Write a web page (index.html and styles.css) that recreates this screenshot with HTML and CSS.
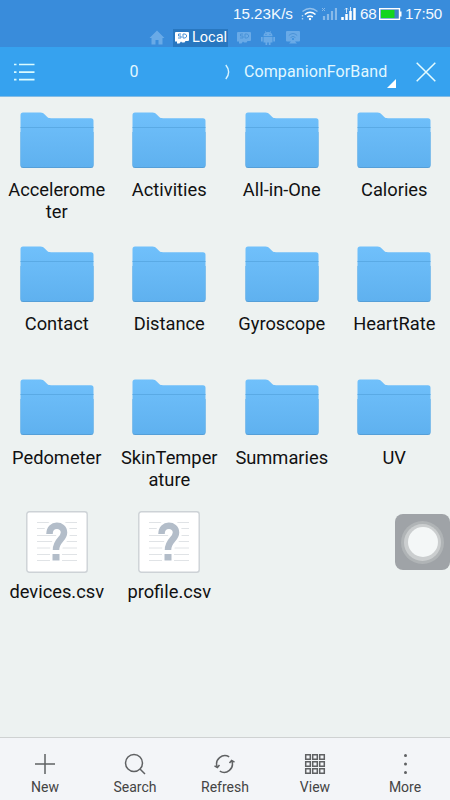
FILE: index.html
```
<!DOCTYPE html>
<html lang="en">
<head>
  <meta charset="UTF-8" />
  <meta name="viewport" content="width=device-width, initial-scale=1.0" />
  <title>CompanionForBand</title>
  <link rel="stylesheet" href="styles.css">
</head>
<body>

  <!-- SHARED ICONS -->
  <svg class="defs" width="0" height="0">
    <defs>
      <linearGradient id="folder-fill" x1="0" y1="0" x2="0" y2="1">
        <stop offset="0" stop-color="#70c0fb" />
        <stop offset="1" stop-color="#5fb1ef" />
      </linearGradient>
      <symbol id="folder" viewBox="0 0 74 57">
        <path fill="#559fd8" d="M.5 4V53.500a2.500 2.500 0 0 0 2.500 2.500H71a2.500 2.500 0 0 0 2.500-2.500V20H.5Z" />
        <path fill="url(#folder-fill)" d="M.5 3A2.500 2.500 0 0 1 3 .5H20.500c2 0 3 .8 4.500 2.300L27 4.800C28.200 6 29 6.200 31 6.200H71a2.500 2.500 0 0 1 2.500 2.500V52.500A2.500 2.500 0 0 1 71 55H3A2.500 2.500 0 0 1 .5 52.500Z" />
        <path fill="none" stroke="#5aaae5" d="M.5 15.500H73.500" />
      </symbol>
      <symbol id="unknown-file" viewBox="0 0 62 62">
        <rect x=".8" y=".8" width="60.400" height="60.400" rx="2.500" fill="#fff" stroke="#cdd2d6" stroke-width="1.400" />
        <path stroke="#e0e3e6" d="M11 11.500H51M11 17.500H51M11 24.500H51M11 30.500H51M11 37H51M11 43.500H51M11 49.500H51" />
        <path fill="none" stroke="#fff" stroke-width="12" d="M24 22.500C24 12 38 12.500 38 21.500C38 29 30 28 30 40V50" />
        <path fill="none" stroke="#b3bdc9" stroke-width="6.500" d="M23.500 23C23.500 12 38 12.500 38 21.500C38 28.500 30 29 30 39" />
        <rect x="26.500" y="43" width="7" height="6.500" fill="#b3bdc9" />
      </symbol>
      <symbol id="sd" viewBox="0 0 14 12">
        <path fill="currentColor" d="M1 0H13a1 1 0 0 1 1 1V8a1 1 0 0 1-1 1H10.500L9.500 10.500H7L6 9.500L4.500 11.500H2V9.500H0V1a1 1 0 0 1 1-1Z" />
        <path class="mark" d="M6 2H3.500V4H6V6H3M8 2V6H10L11.500 5V3L10 2Z" />
      </symbol>
    </defs>
  </svg>

  <!-- STATUS BAR -->
  <div class="status">
    <span class="speed">15.23K/s</span>
    <svg class="wifi" width="18" height="14" viewBox="0 0 18 14" fill="none" stroke="#fff">
      <path stroke-width="1.400" opacity=".45" d="M1.500 4.500Q9-1.500 16.500 4.500" />
      <path stroke-width="1.600" d="M3.800 7.500Q9 3 14.500 7.500M6.300 10Q9 8 11.800 10" />
      <circle cx="9" cy="12" r="1.200" fill="#fff" stroke="none" />
      <path stroke-width="1.400" opacity=".6" d="M1.500 8V9.500M1.500 11V12.500" />
    </svg>
    <svg class="signal-off" width="15" height="14" viewBox="0 0 15 14" fill="none" stroke="#fff" opacity=".4">
      <path stroke-width="2.200" d="M2 9V13M6 7V13M10 4V13M14 1V13" />
      <path d="M0 1L3 4M3 1L0 4" />
    </svg>
    <svg class="signal" width="16" height="14" viewBox="0 0 16 14" fill="none" stroke="#fff">
      <path stroke-width="2.500" d="M1.500 10V13M5.500 7V13M9.500 4V13M13.500 1V13" />
      <path stroke-width="1" d="M5.500 6V1M4 2.500L5.500 1L7 2.500M9.500 0V4" opacity=".75" />
    </svg>
    <span class="charge">68</span>
    <svg class="battery" width="23" height="12" viewBox="0 0 23 12">
      <rect x=".7" y=".7" width="19.800" height="10.600" fill="#3c83c4" stroke="#fff" stroke-width="1.400" />
      <rect x="2" y="2" width="13.500" height="8" fill="#13d51e" />
      <path fill="#fff" d="M21 3.500H22.500V8.500H21Z" />
    </svg>
    <span class="time">17:50</span>
  </div>

  <!-- WINDOW TABS -->
  <nav class="tabs">
    <svg class="tab-home" width="16" height="15" viewBox="0 0 16 15" fill="currentColor">
      <path d="M8 .5L15.500 8H13.500V14.500H9.500V10H6.500V14.500H2.500V8H.5Z" />
    </svg>
    <div class="tab-active">
      <svg width="14" height="12"><use href="#sd" /></svg>
      <span>Local</span>
    </div>
    <svg class="tab-sd" width="14" height="12"><use href="#sd" /></svg>
    <svg class="tab-android" width="14" height="14" viewBox="0 0 14 14" fill="currentColor">
      <path d="M2.500 5C2.500 3.200 3.500 2.200 4.600 1.600L4 .4L4.500.1L5.200 1.300Q7 .7 8.800 1.300L9.500.1L10 .4L9.400 1.600C10.500 2.200 11.500 3.200 11.500 5ZM2.500 5.700H11.500V11.500H9.500V14H7.800V11.500H6.200V14H4.500V11.500H2.500ZM0 6H1.700V10.500H0ZM12.300 6H14V10.500H12.300Z" />
      <circle class="cutout" cx="5" cy="3.300" r=".6" />
      <circle class="cutout" cx="9" cy="3.300" r=".6" />
    </svg>
    <svg class="tab-cast" width="14" height="13" viewBox="0 0 14 13">
      <path fill="currentColor" d="M1 0H13a1 1 0 0 1 1 1V9.500a1 1 0 0 1-1 1H9L11 12.500H3L5 10.500H1A1 1 0 0 1 0 9.500V1A1 1 0 0 1 1 0Z" />
      <path class="mark" d="M2.800 4.500Q7 .5 11.200 4.500M4.600 6.500Q7 4.300 9.400 6.500" />
      <circle class="cutout" cx="7" cy="8" r="1" />
    </svg>
  </nav>

  <!-- PATH BAR -->
  <header class="path-bar">
    <svg class="menu" width="22" height="18" viewBox="0 0 22 18" stroke="#d9fbff" stroke-width="1.700">
      <path d="M0 1.500H2.500M5 1.500H20.500M0 9.200H2.500M5 9.200H20.500M0 16.700H2.500M5 16.700H20.500" />
    </svg>
    <span class="crumb-root">0</span>
    <svg class="crumb-sep" width="5" height="16" viewBox="0 0 5 16" fill="none" stroke="#d9f4ff" stroke-width="1.400">
      <path d="M.8 1Q6.500 8 .8 15" />
    </svg>
    <span class="crumb">CompanionForBand</span>
    <svg class="corner" width="9" height="9" viewBox="0 0 9 9"><path fill="#fff" d="M9 0V9H0Z" /></svg>
    <svg class="close" width="20" height="20" viewBox="0 0 20 20" stroke="#e6fcff" stroke-width="1.500">
      <path d="M.7.7L19.300 19.300M19.300.7L.7 19.300" />
    </svg>
  </header>

  <!-- FILES -->
  <main class="files">
    <div class="item"><svg class="icon"><use href="#folder" /></svg><p>Accelerome<br>ter</p></div>
    <div class="item"><svg class="icon"><use href="#folder" /></svg><p>Activities</p></div>
    <div class="item"><svg class="icon"><use href="#folder" /></svg><p>All-in-One</p></div>
    <div class="item"><svg class="icon"><use href="#folder" /></svg><p>Calories</p></div>
    <div class="item"><svg class="icon"><use href="#folder" /></svg><p>Contact</p></div>
    <div class="item"><svg class="icon"><use href="#folder" /></svg><p>Distance</p></div>
    <div class="item"><svg class="icon"><use href="#folder" /></svg><p>Gyroscope</p></div>
    <div class="item"><svg class="icon"><use href="#folder" /></svg><p>HeartRate</p></div>
    <div class="item"><svg class="icon"><use href="#folder" /></svg><p>Pedometer</p></div>
    <div class="item"><svg class="icon"><use href="#folder" /></svg><p>SkinTemper<br>ature</p></div>
    <div class="item"><svg class="icon"><use href="#folder" /></svg><p>Summaries</p></div>
    <div class="item"><svg class="icon"><use href="#folder" /></svg><p>UV</p></div>
    <div class="item"><svg class="icon icon-file"><use href="#unknown-file" /></svg><p>devices.csv</p></div>
    <div class="item"><svg class="icon icon-file"><use href="#unknown-file" /></svg><p>profile.csv</p></div>
  </main>

  <!-- TOOLBAR -->
  <footer class="toolbar">
    <div class="tool">
      <svg width="22" height="22" viewBox="0 0 22 22"><path d="M11 1V21M1 11H21" /></svg>
      <span>New</span>
    </div>
    <div class="tool">
      <svg width="22" height="22" viewBox="0 0 22 22"><circle cx="10" cy="10" r="8.500" /><path d="M16 16L21 21" /></svg>
      <span>Search</span>
    </div>
    <div class="tool">
      <svg width="22" height="22" viewBox="0 0 22 22">
        <path d="M3.200 14A8.300 8.300 0 0 1 15.200 3.900M17.800 8A8.300 8.300 0 0 1 5.800 18.100" />
        <path d="M.5 12.800L3.400 14.500L5.500 12M20.500 9.200L17.600 7.500L15.500 10" />
      </svg>
      <span>Refresh</span>
    </div>
    <div class="tool">
      <svg width="22" height="22" viewBox="0 0 22 22">
        <path d="M1.700 1.700h4.600v4.600h-4.600zM8.700 1.700h4.600v4.600h-4.600zM15.700 1.700h4.600v4.600h-4.600zM1.700 8.700h4.600v4.600h-4.600zM8.700 8.700h4.600v4.600h-4.600zM15.700 8.700h4.600v4.600h-4.600zM1.700 15.700h4.600v4.600h-4.600zM8.700 15.700h4.600v4.600h-4.600zM15.700 15.700h4.600v4.600h-4.600z" />
      </svg>
      <span>View</span>
    </div>
    <div class="tool">
      <svg class="dots" width="22" height="22" viewBox="0 0 22 22"><circle cx="11.500" cy="2.500" r="1.500" /><circle cx="11.500" cy="11" r="1.500" /><circle cx="11.500" cy="19.500" r="1.500" /></svg>
      <span>More</span>
    </div>
  </footer>

  <!-- FLOATING BUTTON -->
  <div class="touch"><div class="touch-outer"><div class="touch-mid"><div class="touch-dot"></div></div></div></div>

</body>
</html>
```
FILE: styles.css
```
* {
  box-sizing: border-box;
  margin: 0;
  padding: 0;
}

body {
  width: 450px;
  height: 800px;
  display: flex;
  flex-direction: column;
  overflow: hidden;
  font-family: Roboto, sans-serif;
  background: #edf2f1;
  color: #111;
}

svg {
  display: block;
  flex: none;
}

.defs {
  position: absolute;
}

/* --- STATUS BAR --- */
.status {
  height: 28px;
  flex: none;
  display: flex;
  align-items: center;
  padding-left: 233px;
  background: #398cdb;
  color: #f4faff;
  font: 15.2px/28px "Liberation Sans", sans-serif;
}

.speed {
  width: 68px;
}

.wifi {
  margin-right: 3px;
}

.signal-off {
  margin-right: 4px;
}

.signal {
  margin-right: 3px;
}

.charge {
  width: 19px;
  letter-spacing: -0.2px;
}

.time {
  margin-left: 3px;
  letter-spacing: -0.2px;
}

/* --- TABS --- */
.tabs {
  height: 19px;
  flex: none;
  display: flex;
  align-items: center;
  padding-left: 149px;
  background: #398cdb;
  color: #69aae7;
}

.tab-active {
  display: flex;
  align-items: center;
  gap: 3px;
  width: 55px;
  height: 18px;
  margin: 0 9px 0 8px;
  padding-left: 2px;
  background: #2877c0;
  color: #fff;
  font-size: 14.5px;
  line-height: 18px;
}

.tab-sd {
  margin-right: 10px;
}

.tab-android {
  margin-right: 11px;
}

.mark {
  fill: none;
  stroke: #4a93d8;
  stroke-width: 1;
}

.cutout {
  fill: #398cdb;
}

/* --- PATH BAR --- */
.path-bar {
  height: 50px;
  flex: none;
  display: flex;
  align-items: center;
  padding-left: 14px;
  background: #36a2ef;
  border-bottom: 1px solid #83bce5;
  color: #e2f8ff;
  font-size: 16px;
}

.crumb-root {
  width: 10px;
  margin-left: 93.5px;
}

.crumb-sep {
  margin-left: 85.5px;
}

.crumb {
  width: 143px;
  margin-left: 14px;
  letter-spacing: 0.1px;
}

.corner {
  align-self: flex-end;
  margin-bottom: 8px;
}

.close {
  margin-left: 20px;
}

/* --- FILES --- */
.files {
  flex: 1;
  display: grid;
  grid-template-columns: repeat(4, 112.5px);
  grid-auto-rows: 133.7px;
  align-content: start;
  padding-top: 15px;
  padding-left: 0.5px;
}

.item {
  display: flex;
  flex-direction: column;
  align-items: center;
  text-align: center;
}

.item p {
  margin-top: 10.2px;
  font-size: 18.3px;
  line-height: 22px;
}

.icon {
  width: 74px;
  height: 57px;
}

.icon-file {
  width: 62px;
  height: 62px;
  margin-top: -2.5px;
}

.icon-file + p {
  margin-top: 8px;
}

/* --- TOOLBAR --- */
.toolbar {
  height: 63px;
  flex: none;
  display: flex;
  border-top: 1px solid #cfd2d2;
  background: #f3f5f8;
}

.tool {
  flex: 1;
  display: flex;
  flex-direction: column;
  align-items: center;
  padding-top: 15px;
  color: #444;
  font-size: 14px;
  line-height: 18px;
}

.tool svg {
  margin-bottom: 3px;
  fill: none;
  stroke: #5f6163;
  stroke-width: 1.5;
}

.tool .dots {
  fill: #5f6163;
  stroke: none;
}

/* --- FLOATING BUTTON --- */
.touch {
  position: absolute;
  top: 514px;
  left: 395px;
  width: 55px;
  height: 56px;
  border-radius: 8px;
  background: #9fa3a7;
}

.touch,
.touch-outer,
.touch-mid {
  display: flex;
  align-items: center;
  justify-content: center;
}

.touch-outer {
  width: 43px;
  height: 43px;
  border-radius: 50%;
  background: #b0b4b6;
}

.touch-mid {
  width: 37px;
  height: 37px;
  border-radius: 50%;
  background: #cbcecf;
}

.touch-dot {
  width: 30px;
  height: 30px;
  border-radius: 50%;
  background: #f4f7f7;
}
```
